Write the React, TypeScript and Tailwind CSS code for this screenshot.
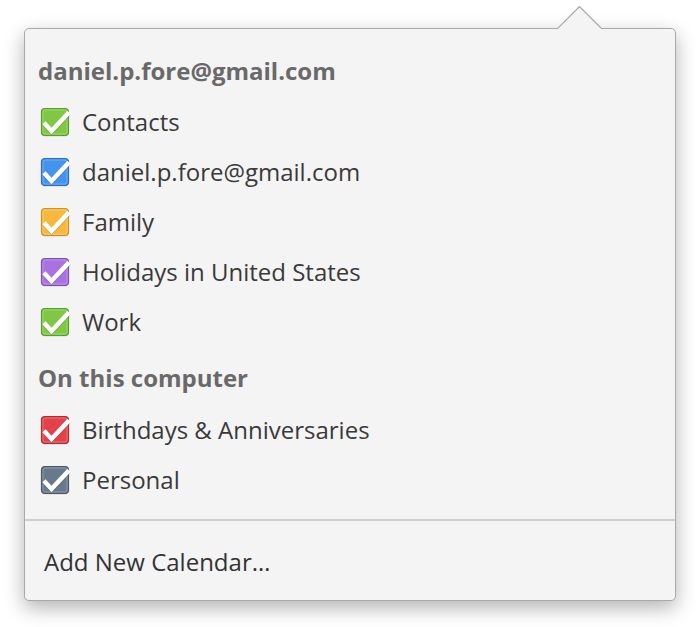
import React from "react";

type Cal = { name: string; fill: string; border: string };

const google: Cal[] = [
  { name: "Contacts", fill: "#7fc744", border: "#5a9e2a" },
  { name: "daniel.p.fore@gmail.com", fill: "#4593ea", border: "#2c6ec6" },
  { name: "Family", fill: "#f6b83f", border: "#cf922a" },
  { name: "Holidays in United States", fill: "#a872e0", border: "#7f4dbd" },
  { name: "Work", fill: "#7fc744", border: "#5a9e2a" },
];

const local: Cal[] = [
  { name: "Birthdays & Anniversaries", fill: "#e2434a", border: "#b52a30" },
  { name: "Personal", fill: "#68798a", border: "#4a5866" },
];

function Check({ fill, border }: { fill: string; border: string }) {
  return (
    <svg width="30" height="30" viewBox="0 0 30 30" className="shrink-0 overflow-visible">
      <rect x="1.5" y="2.5" width="27" height="27" rx="3.5" fill="#000" opacity="0.13" />
      <rect x="1.5" y="1.5" width="27" height="27" rx="3.5" fill={fill} stroke={border} strokeWidth="1.2" />
      <rect x="3" y="3" width="24" height="24" rx="2.5" fill="none" stroke="#fff" strokeOpacity="0.25" strokeWidth="1" />
      <path d="M5.5 17.5 L11.5 24 L27.5 7" fill="none" stroke="#000" strokeOpacity="0.15" strokeWidth="4.5" strokeLinecap="square" transform="translate(0 1)" />
      <path d="M5.5 17.5 L11.5 24 L27.5 7" fill="none" stroke="#fff" strokeWidth="4.5" strokeLinecap="square" />
    </svg>
  );
}

function Row({ c }: { c: Cal }) {
  return (
    <div className="flex h-[50px] items-center gap-[12px] pl-[15px]">
      <Check fill={c.fill} border={c.border} />
      <span className="text-[24px] leading-[30px] text-[#3a3a3a]">{c.name}</span>
    </div>
  );
}

export default function App() {
  return (
    <div
      className="relative h-[627px] w-[700px] overflow-hidden bg-white"
      style={{ fontFamily: '"Open Sans", "Noto Sans", sans-serif' }}
    >
      <div className="ml-[24px] mt-[28px] w-[652px]">
        <div className="relative h-[573px] rounded-[5px] border border-[#a9a9a9] bg-[#f4f4f4] shadow-[0_7px_20px_rgba(0,0,0,0.3)]">
          {/* arrow */}
          <svg
            width="46"
            height="24"
            viewBox="0 0 46 24"
            className="absolute left-[532px] top-[-23px]"
          >
            <path d="M0 23 L22.5 0.5 L45 23" fill="#f4f4f4" stroke="#a9a9a9" strokeWidth="1.2" />
            <rect x="1" y="22.5" width="43" height="2" fill="#f4f4f4" />
          </svg>

          <div className="flex h-full flex-col">
            <div className="pl-[13px] pt-[27px] pb-[11px] text-[24px] font-bold leading-[30px] text-[#696969]">
              daniel.p.fore@gmail.com
            </div>
            {google.map((c) => (
              <Row key={c.name} c={c} />
            ))}
            <div className="pl-[13px] pt-[17px] pb-[13px] text-[24px] font-bold leading-[28px] text-[#696969]">
              On this computer
            </div>
            {local.map((c) => (
              <Row key={c.name} c={c} />
            ))}
            <div className="mt-[14px] h-[2px] w-full bg-[#cdcdcd]" />
            <div className="pl-[19px] pt-[26px] text-[24px] leading-[30px] text-[#333]">
              Add New Calendar…
            </div>
          </div>
        </div>
      </div>
    </div>
  );
}
